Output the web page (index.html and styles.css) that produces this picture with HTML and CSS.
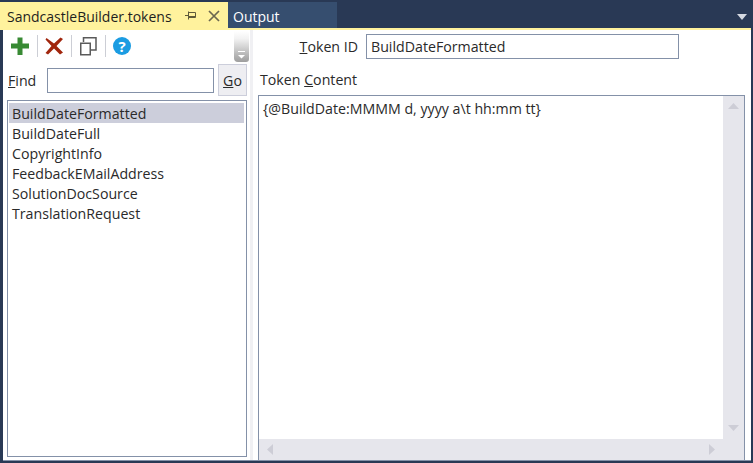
FILE: index.html
```html
<!DOCTYPE html>
<html lang="en">
<head>
<meta charset="utf-8">
<title>SandcastleBuilder.tokens</title>
<link rel="stylesheet" href="styles.css">
</head>
<body>
<div class="window">
  <div class="tabstrip">
    <div class="tab tab-active">
      <span class="tab-title">SandcastleBuilder.tokens</span>
      <svg class="pin" width="11" height="9" viewBox="0 0 11 9"><path d="M0 4.500H3.500M3.500 .5V8.500M3.500 1.500H10.500V6.500H3.500M3.500 5.500H10.500" fill="none" stroke="#5f5a3a" stroke-width="1"/></svg>
      <svg class="close" width="12" height="12" viewBox="0 0 12 12"><path d="M1 1L11 11M11 1L1 11" stroke="#6b6750" stroke-width="1.7"/></svg>
    </div>
    <div class="tab tab-other"><span class="tab-title">Output</span></div>
    <div class="tab-spacer"></div>
    <svg class="tab-menu" width="10" height="6" viewBox="0 0 10 6"><path d="M0 0H10L5 6Z" fill="#d5d9e2"/></svg>
  </div>
  <div class="accent"></div>
  <div class="content">
    <aside class="left">
      <div class="toolbar">
        <div class="tools">
          <svg class="tool" width="20" height="20" viewBox="0 0 20 20"><path d="M7.500 1.500H12.500V7.500H19V12.500H12.500V19H7.500V12.500H1V7.500H7.500Z" fill="#388a34"/></svg>
          <span class="sep"></span>
          <svg class="tool" width="20" height="20" viewBox="0 0 20 20"><path d="M2.500 2L10 7.500L16.500 1.500L19 3L12.500 10L19 16.500L16 18.500L10 12.500L4 18.500L1.500 17L7.500 10L1.500 3.500Z" fill="#a1260d"/></svg>
          <span class="sep"></span>
          <svg class="tool" width="20" height="20" viewBox="0 0 20 20"><path d="M5.500 6V1.750H18V14H13" fill="none" stroke="#5a5a5a" stroke-width="1.500"/><path d="M2.750 7.250H12.250V18.750H2.750Z" fill="#fff" stroke="#5a5a5a" stroke-width="1.500"/></svg>
          <span class="sep"></span>
          <svg class="tool" width="20" height="20" viewBox="0 0 20 20"><circle cx="10" cy="10" r="9" fill="#1b9ce2"/><text x="10" y="15.500" class="help-mark">?</text></svg>
        </div>
        <div class="grip"><svg width="9" height="9" viewBox="0 0 9 9"><path d="M1 1.500H8" stroke="#fff"/><path d="M1 5H8L4.500 8.500Z" fill="#fff"/></svg></div>
      </div>
      <div class="find">
        <label class="find-label"><u>F</u>ind</label>
        <div class="input find-input"></div>
        <div class="go"><u>G</u>o</div>
      </div>
      <ul class="list">
        <li class="item item-selected">BuildDateFormatted</li>
        <li class="item">BuildDateFull</li>
        <li class="item">CopyrightInfo</li>
        <li class="item">FeedbackEMailAddress</li>
        <li class="item">SolutionDocSource</li>
        <li class="item">TranslationRequest</li>
      </ul>
    </aside>
    <div class="splitter"></div>
    <main class="right">
      <div class="id-row">
        <label class="id-label"><u>T</u>oken ID</label>
        <div class="input id-input">BuildDateFormatted</div>
      </div>
      <label class="content-label">Token <u>C</u>ontent</label>
      <div class="editor">
        <div class="editor-top">
          <div class="editor-text">{@BuildDate:MMMM d, yyyy a\t hh:mm tt}</div>
          <div class="vscroll">
            <svg width="11" height="6" viewBox="0 0 11 6"><path d="M0 6H11L5.500 0Z" fill="#cdcdd6"/></svg>
            <svg width="11" height="6" viewBox="0 0 11 6"><path d="M0 0H11L5.500 6Z" fill="#cdcdd6"/></svg>
          </div>
        </div>
        <div class="hscroll">
          <svg width="6" height="11" viewBox="0 0 6 11"><path d="M6 0V11L0 5.500Z" fill="#cdcdd6"/></svg>
          <svg width="6" height="11" viewBox="0 0 6 11"><path d="M0 0V11L6 5.500Z" fill="#cdcdd6"/></svg>
        </div>
      </div>
    </main>
  </div>
</div>
</body>
</html>
```
FILE: styles.css
```css
* { box-sizing: border-box; }
html, body { margin: 0; padding: 0; }
body { width: 753px; height: 463px; overflow: hidden; background: #293955; }
.window {
  width: 753px; height: 463px; display: flex; flex-direction: column;
  font-family: "Open Sans", "Noto Sans", sans-serif; font-size: 14.2px; color: #2a2a2a;
}
.tabstrip { height: 28px; padding-top: 2px; display: flex; align-items: stretch; background: #293955; }
.tab { display: flex; align-items: center; }
.tab-active { width: 228px; padding-left: 7px; background: #fff29d; color: #1e1e1e; }
.tab-title { font-size: 14px; line-height: 26px; padding-top: 3px; }
.tab-active .tab-title { width: 165px; flex: none; white-space: nowrap; }
.pin { margin-left: 13px; flex: none; }
.close { margin: 2px 0 0 12px; flex: none; }
.tab-other { width: 109px; padding-left: 5px; background: #364e6f; color: #fff; }
.tab-spacer { flex: 1; }
.tab-menu { align-self: center; margin: 3px 6px 0 0; }
.accent { height: 2px; background: #fff29d; margin-right: 2px; }
.content {
  flex: 1; display: flex; min-height: 0; margin: 0 2px 2px 3px; background: #fff;
  border-bottom: 1px solid #8491a8;
}
.left { width: 247px; display: flex; flex-direction: column; padding: 0 3px 3px 4px; }
.toolbar { height: 32px; flex: none; display: flex; margin-right: -2px; }
.tools { flex: 1; display: flex; align-items: center; gap: 6px; padding-left: 3px; }
.tool { flex: none; margin-right: 1px; }
.sep { width: 1px; height: 22px; background: #ccced5; }
.help-mark { font: bold 15px "Open Sans", sans-serif; fill: #fff; text-anchor: middle; }
.grip {
  width: 15px; margin-top: 1px; display: flex; align-items: flex-end; justify-content: center; padding-bottom: 3px;
  background: linear-gradient(#fff, #f2f2f2 25%, #b5b5b5 78%, #9e9e9e);
  border-radius: 0 3px 3px 4px;
}
.find { display: flex; align-items: stretch; height: 36px; flex: none; margin-top: 2px; padding-bottom: 4px; }
.find-label { width: 40px; padding-left: 1px; line-height: 33px; }
.input { border: 1px solid #8491a8; background: #fff; }
.find-input { width: 167px; height: 25px; margin-top: 4px; }
.go {
  width: 29px; margin-left: 4px; background: #eeeef2; border: 1px solid #cccedb;
  text-align: center; line-height: 31px;
}
.list {
  list-style: none; margin: 0; padding: 2px 1px; flex: 1; min-height: 0; border: 1px solid #8491a8;
}
.item { height: 20px; line-height: 21px; padding-left: 3px; }
.item-selected { background: #cccedb; margin-right: 1px; }
.splitter { width: 3px; background: #f0f0f3; }
.right { flex: 1; display: flex; flex-direction: column; padding-left: 5px; }
.id-row { height: 29px; margin-top: 4px; display: flex; align-items: stretch; }
.id-label { width: 108px; text-align: right; padding-right: 8px; line-height: 25px; }
.id-input { width: 313px; height: 25px; padding-left: 4px; line-height: 23px; }
.content-label { height: 32px; padding: 7px 0 0 2px; line-height: 20px; }
.editor {
  flex: 1; min-height: 0; width: 487px; display: flex; flex-direction: column;
  border: 1px solid #8491a8; border-bottom: 0;
}
.editor-top { flex: 1; min-height: 0; display: flex; }
.editor-text { flex: 1; padding: 3px 0 0 4px; line-height: 20px; }
.vscroll {
  width: 21px; background: #e6e6ec; display: flex; flex-direction: column;
  justify-content: space-between; align-items: center; padding: 7px 0 8px;
}
.hscroll {
  height: 21px; flex: none; background: #e6e6ec; display: flex; align-items: center;
  justify-content: space-between; padding: 0 29px 1px 8px;
}
```
